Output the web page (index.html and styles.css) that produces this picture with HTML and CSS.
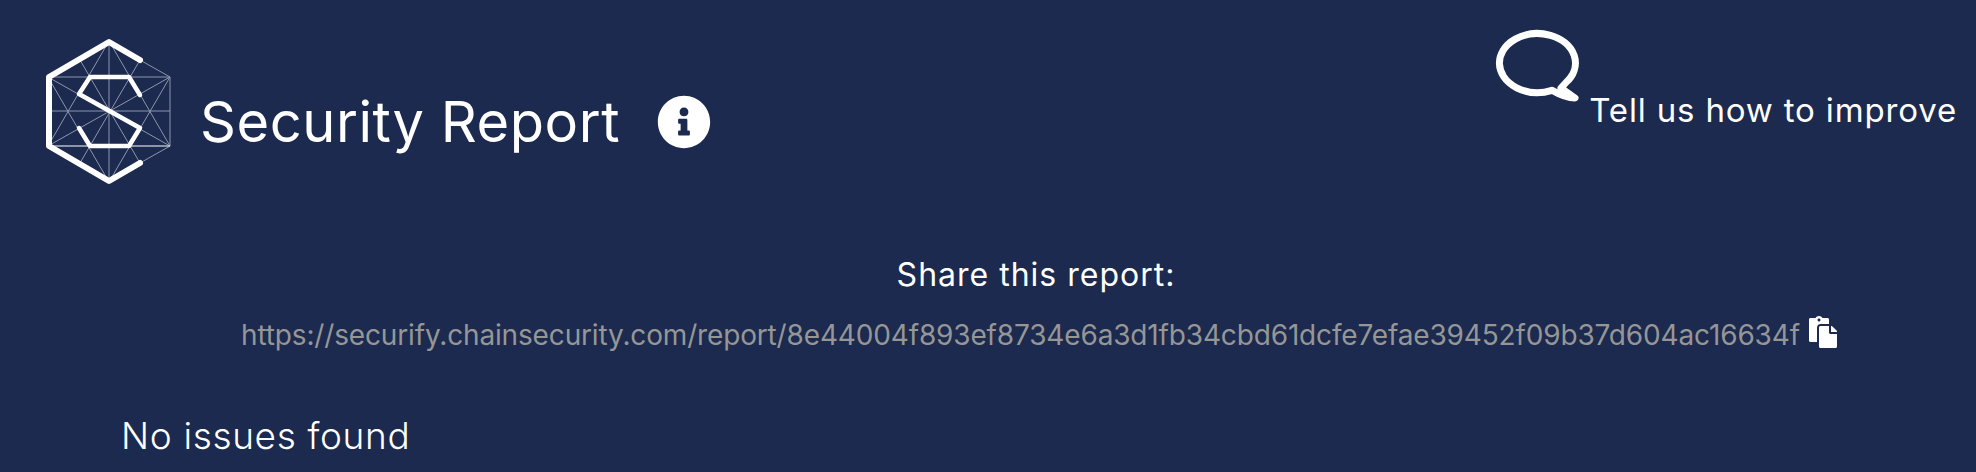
FILE: index.html
```html
<html lang="en">
<head>
  <meta charset="UTF-8">
  <meta name="viewport" content="width=device-width, initial-scale=1.0">
  <title>Security Report</title>
  <link rel="stylesheet" href="styles.css">
</head>
<body>
  <header class="topbar">
    <div class="brand">
      <svg class="logo" viewBox="0 0 180 180">
        <g class="logo-thin">
          <path d="M120 40L150 57V126L120 143"/>
          <path d="M28 57H150M28 91H150M89 21V162"/>
          <path d="M28 126L150 57M28 57L150 126"/>
          <path d="M89 21L28 126M89 21L150 126M89 162L28 57M89 162L150 57"/>
          <path d="M60 40L120 143M120 40L60 143"/>
        </g>
        <path class="logo-line" d="M28 126H150"/>
        <path class="logo-thick" d="M120 40L89 22L29 57V126L89 161L120 143"/>
        <path class="logo-mid" d="M120 75L109 57H70L59 74L120 108L109 126H70L59 108"/>
      </svg>
      <h1>Security Report</h1>
      <svg class="info-icon" viewBox="0 0 512 512">
        <path d="M256 8C119.043 8 8 119.083 8 256c0 136.997 111.043 248 248 248s248-111.003 248-248C504 119.083 392.957 8 256 8zm0 110c23.196 0 42 18.804 42 42s-18.804 42-42 42-42-18.804-42-42 18.804-42 42-42zm56 254c0 6.627-5.373 12-12 12h-88c-6.627 0-12-5.373-12-12v-24c0-6.627 5.373-12 12-12h12v-64h-12c-6.627 0-12-5.373-12-12v-24c0-6.627 5.373-12 12-12h64c6.627 0 12 5.373 12 12v100h12c6.627 0 12 5.373 12 12v24z"/>
      </svg>
    </div>
    <a class="feedback">
      <svg class="bubble" viewBox="0 0 95 82">
        <path d="M61 65.3A38 29.5 0 1 1 75 57.5L70 63L84 73C77 73 69 70 61 65.3Z"/>
      </svg>
      <span>Tell us how to improve</span>
    </a>
  </header>

  <main class="report">
    <section class="share">
      <p class="share-title">Share this report:</p>
      <p class="share-link">
        <span>https://securify.chainsecurity.com/report/8e44004f893ef8734e6a3d1fb34cbd61dcfe7efae39452f09b37d604ac16634f</span>
        <svg class="copy-icon" viewBox="0 0 448 512">
          <path d="M128 184c0-30.879 25.122-56 56-56h136V56c0-13.255-10.745-24-24-24h-80.61C204.306 12.89 183.637 0 160 0s-44.306 12.89-55.39 32H24C10.745 32 0 42.745 0 56v336c0 13.255 10.745 24 24 24h104V184zm32-144c13.255 0 24 10.745 24 24s-10.745 24-24 24-24-10.745-24-24 10.745-24 24-24zm184 248h104v200c0 13.255-10.745 24-24 24H184c-13.255 0-24-10.745-24-24V184c0-13.255 10.745-24 24-24h136v104c0 13.2 10.8 24 24 24zm104-38.059V256h-96v-96h6.059a24 24 0 0 1 16.97 7.029l65.941 65.941a24.002 24.002 0 0 1 7.03 16.97z"/>
        </svg>
      </p>
    </section>
    <h2 class="result">No issues found</h2>
  </main>
</body>
</html>
```

FILE: styles.css
```css
html, body {
  height: 100%;
}

body {
  margin: 0;
  background: #1b2a4e;
  color: #ffffff;
  font-family: 'Inter', sans-serif;
  overflow: hidden;
}

.topbar {
  display: flex;
  justify-content: space-between;
  align-items: flex-start;
  padding: 20px 19px 0 20px;
  height: 204px;
  box-sizing: border-box;
}

.brand {
  display: flex;
  align-items: center;
}

.logo {
  width: 180px;
  height: 180px;
  fill: none;
}

.logo-thin {
  stroke: #8d96ac;
  stroke-width: 1;
}

.logo-line {
  stroke: #ffffff;
  stroke-width: 1.2;
}

.logo-thick {
  stroke: #ffffff;
  stroke-width: 6;
  stroke-linejoin: round;
  stroke-linecap: round;
}

.logo-mid {
  stroke: #ffffff;
  stroke-width: 4.5;
  stroke-linejoin: round;
  stroke-linecap: round;
}

h1 {
  margin: 24px 0 0;
  font-size: 56px;
  font-weight: 400;
  letter-spacing: 0.55px;
}

.info-icon {
  width: 54px;
  height: 54px;
  margin: 24px 0 0 37px;
  fill: #ffffff;
}

.feedback {
  display: flex;
  align-items: flex-end;
  margin-top: 5px;
  font-size: 33px;
  line-height: 42px;
  letter-spacing: 0.84px;
}

.bubble {
  width: 95px;
  height: 82px;
  fill: none;
  stroke: #ffffff;
  stroke-width: 7;
  stroke-linejoin: round;
}

.feedback span {
  margin-left: 3px;
  margin-bottom: -24px;
}

.report {
  padding-left: 102px;
}

.share {
  text-align: center;
}

.share-title {
  margin: 50px 0 0;
  padding-right: 6px;
  font-size: 32px;
  line-height: 42px;
  letter-spacing: 1px;
}

.share-link {
  display: flex;
  justify-content: center;
  align-items: center;
  margin: 21px 0 0;
  color: #969696;
  font-size: 28px;
  line-height: 36px;
  letter-spacing: -0.155px;
}

.copy-icon {
  width: 28px;
  height: 32px;
  margin-left: 9px;
  margin-top: -6px;
  fill: #ffffff;
}

.result {
  margin: 60px 0 0 19px;
  font-size: 37px;
  font-weight: 300;
  letter-spacing: 0.65px;
}
```
